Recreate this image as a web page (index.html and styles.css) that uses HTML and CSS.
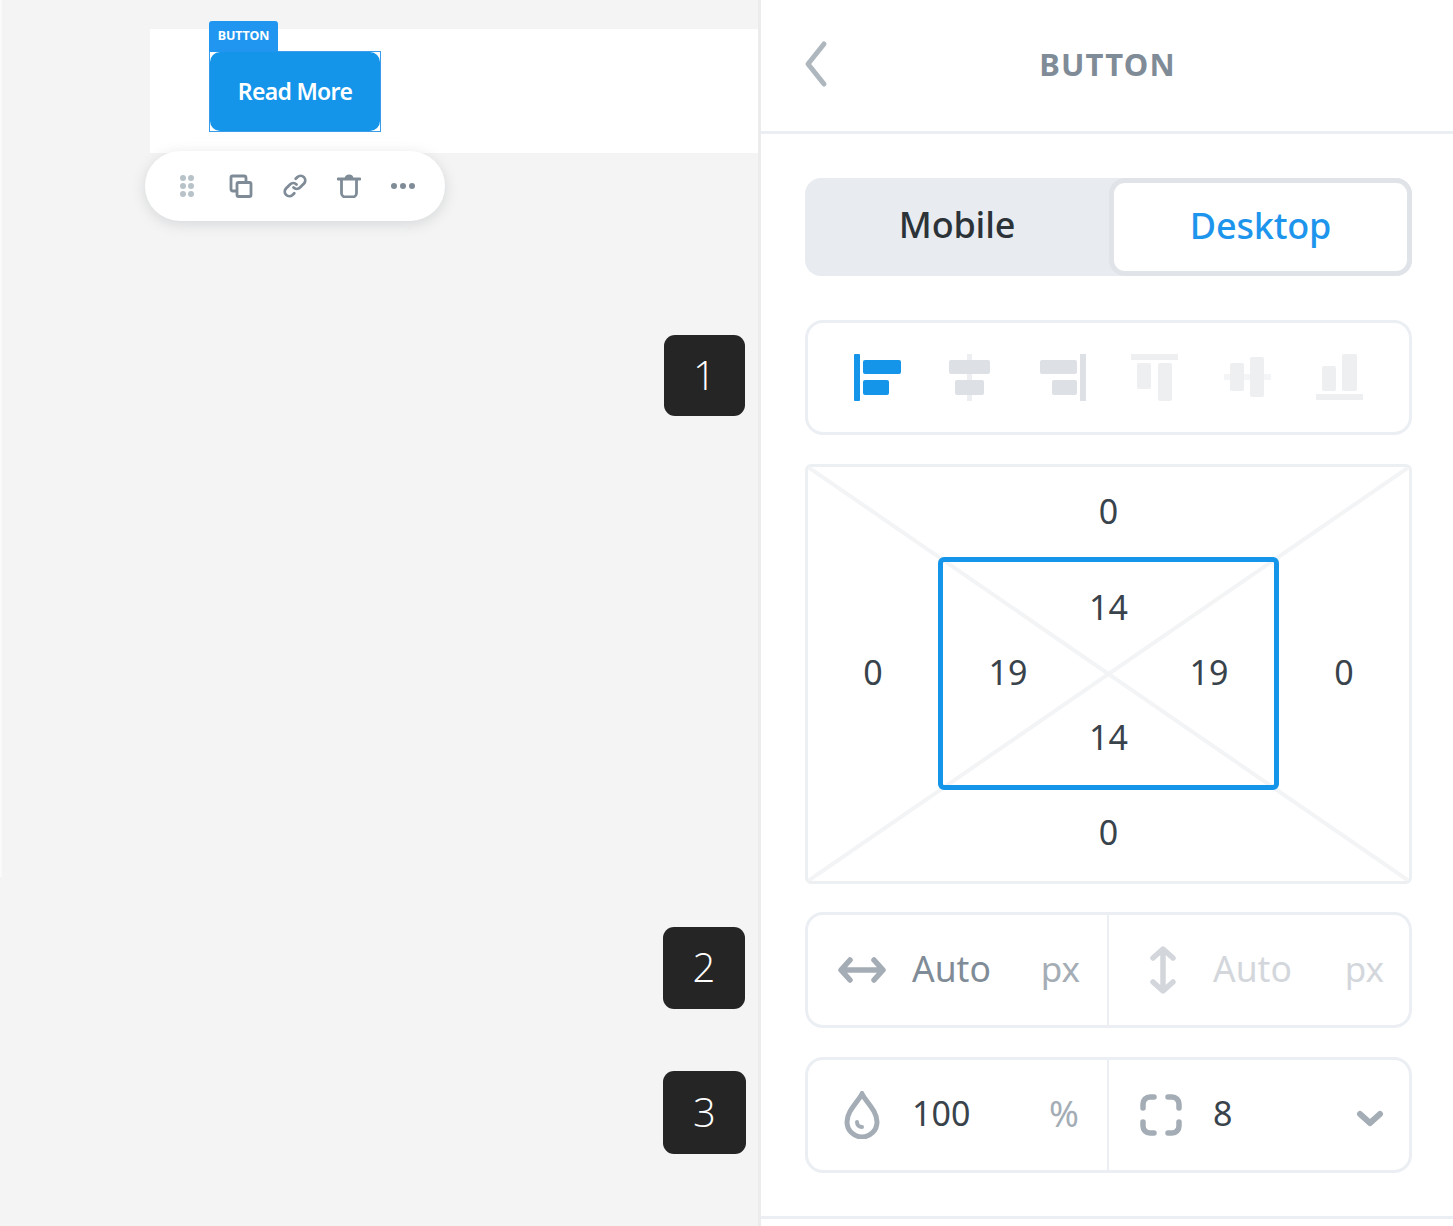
FILE: index.html
```html
<!DOCTYPE html>
<html lang="en">
<head>
  <meta charset="UTF-8">
  <meta name="viewport" content="width=device-width, initial-scale=1.0">
  <title>Button settings</title>
  <link rel="stylesheet" href="styles.css">
</head>
<body>

<div class="page">
  <main class="canvas">
    <section class="block">
      <div class="selected">
        <span class="selected-label">BUTTON</span>
        <a class="read-more">Read More</a>
      </div>
      <div class="toolbar">
        <svg class="tool" viewBox="0 0 24 24" fill="#b8c2c9"><circle cx="8" cy="4" r="3"/><circle cx="16" cy="4" r="3"/><circle cx="8" cy="12" r="3"/><circle cx="16" cy="12" r="3"/><circle cx="8" cy="20" r="3"/><circle cx="16" cy="20" r="3"/></svg>
        <svg class="tool" viewBox="0 0 24 24" fill="none" stroke="#7f8c97" stroke-width="2.8" stroke-linejoin="round"><path d="M7 17H4a2 2 0 0 1-2-2V3.500A1.500 1.500 0 0 1 3.500 2H15a2 2 0 0 1 2 2v3"/><rect x="8" y="8.500" width="14" height="14" rx="1.500"/></svg>
        <svg class="tool" viewBox="0 0 24 24" fill="none" stroke="#7f8c97" stroke-width="2.8" stroke-linecap="round"><path d="M10.500 13.500a4.600 4.600 0 0 0 6.500 0l4-4a4.600 4.600 0 0 0-6.500-6.500l-1.800 1.800"/><path d="M13.500 10.500a4.600 4.600 0 0 0-6.500 0l-4 4a4.600 4.600 0 0 0 6.500 6.500l1.800-1.800"/></svg>
        <svg class="tool" viewBox="0 0 24 24" fill="none" stroke="#7f8c97" stroke-width="2.8" stroke-linecap="round" stroke-linejoin="round"><path d="M1 5h22"/><path d="M9 4.500C9 1 15 1 15 4.500" fill="#7f8c97"/><path d="M4.500 6v13a4 4 0 0 0 4 4h7a4 4 0 0 0 4-4V6"/></svg>
        <svg class="tool" viewBox="0 0 24 24" fill="#7f8c97"><circle cx="3" cy="12" r="3"/><circle cx="12" cy="12" r="3"/><circle cx="21" cy="12" r="3"/></svg>
      </div>
    </section>
    <div class="step step-1">1</div>
    <div class="step step-2">2</div>
    <div class="step step-3">3</div>
  </main>

  <aside class="panel">
    <header class="panel-head">
      <svg class="back" viewBox="0 0 24 46" fill="none" stroke="#aeb7be" stroke-width="5" stroke-linecap="round" stroke-linejoin="round"><path d="M20 3 4 23l16 20"/></svg>
      <h1 class="panel-title">BUTTON</h1>
    </header>

    <div class="panel-body">
      <div class="tabs">
        <div class="tab">Mobile</div>
        <div class="tab tab-active">Desktop</div>
      </div>

      <div class="aligns">
        <svg class="align" viewBox="0 0 47 47" fill="#1595e9"><rect x="0" y="0" width="6" height="47" rx="1"/><rect x="9" y="6" width="38" height="14" rx="2"/><rect x="9" y="26" width="26" height="15" rx="2"/></svg>
        <svg class="align" viewBox="0 0 47 47" fill="#dde0e5"><rect x="21" y="0" width="5" height="47" fill="#eceef1"/><rect x="3" y="6" width="41" height="14" rx="2"/><rect x="9" y="26" width="29" height="15" rx="2"/></svg>
        <svg class="align" viewBox="0 0 47 47" fill="#dde0e5"><rect x="41" y="0" width="6" height="47"/><rect x="1" y="6" width="37" height="14" rx="2"/><rect x="13" y="26" width="25" height="15" rx="2"/></svg>
        <svg class="align" viewBox="0 0 47 47" fill="#eeeff1"><rect x="0" y="0" width="47" height="6"/><rect x="6" y="9" width="14" height="26" rx="2"/><rect x="27" y="9" width="14" height="38" rx="2"/></svg>
        <svg class="align" viewBox="0 0 47 47" fill="#eeeff1"><rect x="0" y="20" width="47" height="6" fill="#f4f5f6"/><rect x="6" y="9" width="14" height="28" rx="2"/><rect x="26" y="3" width="14" height="40" rx="2"/></svg>
        <svg class="align" viewBox="0 0 47 47" fill="#eeeff1"><rect x="0" y="40" width="47" height="6"/><rect x="6" y="12" width="14" height="25" rx="2"/><rect x="26" y="0" width="15" height="37" rx="2"/></svg>
      </div>

      <div class="box-model">
        <svg class="diagonals" viewBox="0 0 100 100" preserveAspectRatio="none"><line x1="0" y1="0" x2="100" y2="100" vector-effect="non-scaling-stroke"/><line x1="100" y1="0" x2="0" y2="100" vector-effect="non-scaling-stroke"/></svg>
        <span class="val val-top">0</span>
        <span class="val val-left">0</span>
        <div class="padding-box">
          <span class="val val-top">14</span>
          <span class="val val-left">19</span>
          <span class="val val-right">19</span>
          <span class="val val-bottom">14</span>
        </div>
        <span class="val val-right">0</span>
        <span class="val val-bottom val-outer-bottom">0</span>
      </div>

      <div class="fields">
        <div class="field">
          <span class="field-icon">
            <svg class="icon-w" viewBox="0 0 48 26" fill="none" stroke="#a4adb5" stroke-width="5.500" stroke-linecap="round" stroke-linejoin="round"><path d="M4 13h40M12 3 3 13l9 10M36 3l9 10-9 10"/></svg>
          </span>
          <span class="field-value field-text muted">Auto</span>
          <span class="field-unit">px</span>
        </div>
        <div class="field field-off">
          <span class="field-icon">
            <svg class="icon-h" viewBox="0 0 26 48" fill="none" stroke="#d3d7dc" stroke-width="5.500" stroke-linecap="round" stroke-linejoin="round"><path d="M13 4v40M3 12l10-9 10 9M3 36l10 9 10-9"/></svg>
          </span>
          <span class="field-value field-text muted">Auto</span>
          <span class="field-unit">px</span>
        </div>
      </div>

      <div class="fields">
        <div class="field">
          <span class="field-icon">
            <svg class="icon-drop" viewBox="0 0 36 48" fill="none" stroke="#a4adb5" stroke-width="5" stroke-linecap="round"><path d="M18 3C13 12 3 20 3 31a15 15 0 0 0 30 0C33 20 23 12 18 3Z"/><path d="M13 31c0 3 2 5 5 5" stroke-width="4"/></svg>
          </span>
          <span class="field-value">100</span>
          <span class="field-unit field-percent">%</span>
        </div>
        <div class="field">
          <span class="field-icon">
            <svg class="icon-radius" viewBox="0 0 42 42" fill="none" stroke="#a4adb5" stroke-width="5.500" stroke-linecap="round"><path d="M3 14V10a7 7 0 0 1 7-7h4M28 3h4a7 7 0 0 1 7 7v4M39 28v4a7 7 0 0 1-7 7h-4M14 39h-4a7 7 0 0 1-7-7v-4"/></svg>
          </span>
          <span class="field-value">8</span>
          <svg class="chevron" viewBox="0 0 28 17" fill="none" stroke="#a4adb5" stroke-width="6" stroke-linecap="round" stroke-linejoin="round"><path d="m4 4 10 9L24 4"/></svg>
        </div>
      </div>
    </div>

    <div class="panel-foot"></div>
  </aside>
</div>

</body>
</html>
```

FILE: styles.css
```css
* {
  box-sizing: border-box;
}
body {
  margin: 0;
  font-family: "Noto Sans", Arial, sans-serif;
  background: #fff;
}
.page {
  display: flex;
  height: 1226px;
  overflow: hidden;
}

/* left canvas */
.canvas {
  position: relative;
  width: 758px;
  flex-shrink: 0;
  padding: 29px 0 0 150px;
  background: #f4f4f4;
}
.canvas::before {
  content: "";
  position: absolute;
  left: 0;
  top: 0;
  width: 2px;
  height: 877px;
  background: #fafafa;
}
.block {
  position: relative;
  height: 124px;
  padding: 22px 0 0 59px;
  background: #fff;
}
.selected {
  position: relative;
  width: 172px;
  height: 81px;
  border: 1px solid #3a9be8;
}
.selected-label {
  position: absolute;
  left: -1px;
  top: -31px;
  width: 69px;
  height: 31px;
  padding-top: 6px;
  background: #2196f0;
  border-radius: 3px 3px 0 0;
  color: #fff;
  font-size: 12.5px;
  font-weight: 700;
  letter-spacing: -0.1px;
  line-height: 18px;
  text-align: center;
}
.read-more {
  display: flex;
  align-items: center;
  justify-content: center;
  height: 100%;
  padding-bottom: 2px;
  background: #1595e9;
  border-radius: 10px;
  color: #fff;
  font-size: 23px;
  font-weight: 600;
  letter-spacing: -0.7px;
}
.toolbar {
  position: absolute;
  left: -5px;
  top: 122px;
  display: flex;
  align-items: center;
  justify-content: center;
  gap: 30px;
  width: 300px;
  height: 70px;
  background: #fff;
  border-radius: 35px;
  box-shadow: 0 3px 14px rgba(90,100,110,0.2);
}
.tool {
  width: 24px;
  height: 24px;
}
.step {
  position: absolute;
  display: flex;
  align-items: center;
  justify-content: center;
  padding-bottom: 3px;
  background: #252525;
  border-radius: 11px;
  color: #fff;
  font-family: "Open Sans", sans-serif;
  font-size: 40px;
  font-weight: 300;
}
.step-1 {
  left: 664px;
  top: 335px;
  width: 81px;
  height: 81px;
}
.step-2 {
  left: 663px;
  top: 927px;
  width: 82px;
  height: 82px;
}
.step-3 {
  left: 663px;
  top: 1071px;
  width: 83px;
  height: 83px;
}

/* right panel */
.panel {
  flex: 1;
  display: flex;
  flex-direction: column;
  border-left: 3px solid #ececec;
  background: #fff;
}
.panel-head {
  position: relative;
  display: flex;
  align-items: center;
  justify-content: center;
  height: 134px;
  border-bottom: 3px solid #ebeff3;
}
.back {
  position: absolute;
  left: 43px;
  top: 40px;
  width: 24px;
  height: 48px;
}
.panel-title {
  margin: 0 0 3px 1px;
  color: #7f8c97;
  font-size: 31px;
  font-weight: 700;
  letter-spacing: 1.2px;
}
.panel-body {
  flex: 1;
  padding: 44px 41px 0 44px;
}

.tabs {
  display: flex;
  height: 98px;
  background: #e8ebef;
  border-radius: 16px;
}
.tab {
  flex: 1;
  display: flex;
  align-items: center;
  justify-content: center;
  padding-bottom: 5px;
  color: #2c3338;
  font-size: 36px;
  font-weight: 500;
  letter-spacing: -0.2px;
}
.tab-active {
  flex: none;
  width: 303px;
  background: #fff;
  border: 5px solid #e0e3e8;
  border-radius: 16px;
  color: #1e95ec;
  padding-bottom: 4px;
}

.aligns {
  display: flex;
  align-items: center;
  justify-content: center;
  gap: 45.6px;
  height: 115px;
  margin-top: 44px;
  border: 3px solid #ebeff3;
  border-radius: 18px;
}
.align {
  width: 47px;
  height: 47px;
}

.box-model {
  position: relative;
  display: grid;
  grid-template-columns: 1fr 341px 1fr;
  grid-template-rows: 90px 233px 1fr;
  align-items: center;
  justify-items: center;
  height: 420px;
  margin-top: 29px;
  border: 3px solid #edf0f3;
  border-radius: 6px;
}
.diagonals {
  position: absolute;
  left: 0;
  top: 0;
  width: 100%;
  height: 100%;
}
.diagonals line {
  stroke: #f3f4f6;
  stroke-width: 4;
}
.padding-box {
  position: relative;
  display: grid;
  grid-template-columns: 130px 1fr 130px;
  grid-template-rows: 92px 1fr 93px;
  align-items: center;
  justify-items: center;
  width: 100%;
  height: 100%;
  border: 5px solid #1595e9;
  border-radius: 6px;
  grid-column: 2;
  grid-row: 2;
}
.val {
  position: relative;
  padding-bottom: 3px;
  color: #39434b;
  font-size: 34px;
  line-height: 1;
}
.val-top {
  grid-column: 2;
  grid-row: 1;
}
.val-left {
  grid-column: 1;
  grid-row: 2;
}
.val-right {
  grid-column: 3;
  grid-row: 2;
}
.val-bottom {
  grid-column: 2;
  grid-row: 3;
}
.val-outer-bottom {
  padding-bottom: 8px;
}

.fields {
  display: flex;
  height: 116px;
  margin-top: 28px;
  border: 3px solid #ebeff3;
  border-radius: 18px;
}
.fields + .fields {
  margin-top: 29px;
}
.field {
  flex: 0 0 299px;
  display: flex;
  align-items: center;
  padding: 0 27px 0 30px;
}
.field + .field {
  flex: 1;
  border-left: 2px solid #ebeff3;
  padding: 0 25px 0 30px;
}
.field-icon {
  display: flex;
  align-items: center;
  justify-content: center;
  width: 48px;
  height: 48px;
  margin-right: 26px;
  flex-shrink: 0;
}
.icon-w {
  width: 48px;
  height: 26px;
}
.icon-h {
  width: 26px;
  height: 48px;
}
.icon-drop {
  width: 36px;
  height: 48px;
}
.icon-radius {
  width: 42px;
  height: 42px;
  margin-left: -5px;
}
.field-value {
  padding-bottom: 4px;
  color: #39434b;
  font-size: 34px;
}
.field-text {
  font-size: 35.5px;
}
.field-value.muted {
  color: #7f8c97;
}
.field-unit {
  margin-left: auto;
  padding-bottom: 3px;
  color: #a4adb5;
  font-size: 35px;
}
.field-percent {
  margin-right: 1px;
  font-size: 36px;
}
.field-off .field-value,
.field-off .field-unit {
  color: #d3d7dc;
}
.chevron {
  width: 28px;
  height: 17px;
  margin-left: auto;
  margin-top: 6px;
}

.panel-foot {
  height: 10px;
  border-top: 3px solid #ebeff3;
}
```
